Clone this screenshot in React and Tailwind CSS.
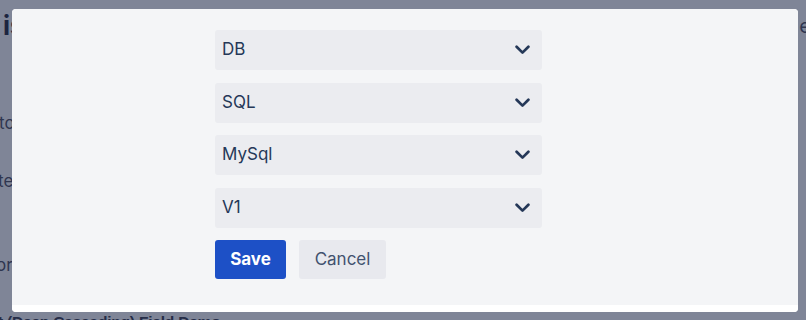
import React from 'react'

const options = ['DB', 'SQL', 'MySql', 'V1']

const Chevron = () => (
  <svg width="15" height="10" viewBox="0 0 15 10" fill="none">
    <path d="M1.6 1.8L7.5 7.6L13.4 1.8" stroke="#253858" strokeWidth="2.7" strokeLinecap="round" strokeLinejoin="round" />
  </svg>
)

const SelectBox = ({ value }) => (
  <div className="flex h-[40px] w-[327px] items-center justify-between rounded-[3px] bg-[#ebecf0] pl-[7px] pr-[12px]">
    <span className="text-[17px] text-[#253858]">{value}</span>
    <Chevron />
  </div>
)

export default function App() {
  return (
    <div className="relative h-[320px] w-[806px] overflow-hidden bg-[#7f8597]" style={{ fontFamily: 'Inter, "Liberation Sans", sans-serif' }}>
      {/* page behind the dialog */}
      <div className="flex flex-col text-[#2f3650]">
        <div className="flex items-start justify-between">
          <div className="ml-[3px] mt-[11px] text-[26px] font-bold leading-[30px] text-[#1c2440]">is</div>
          <div className="mr-[-5px] mt-[14px] text-[20px] leading-[24px]">e</div>
        </div>
        <div className="ml-[-1px] mt-[72px] text-[17px] leading-[20px]">to</div>
        <div className="ml-[-2px] mt-[38px] text-[17px] leading-[20px]">te</div>
        <div className="ml-[-4px] mt-[64px] text-[17px] leading-[20px]">or</div>
        <div className="ml-[-2px] mt-[37px] text-[15.5px] font-bold leading-[20px] tracking-[-0.2px] text-[#262d48]" style={{ fontFamily: '"Liberation Sans", sans-serif' }}>t (Deep Cascading) Field Demo</div>
      </div>

      {/* dialog */}
      <div className="absolute left-[12px] top-[9px] flex h-[303px] w-[786px] flex-col overflow-hidden rounded-[4px] bg-white">
        <div className="flex flex-1 flex-col gap-[12.5px] bg-[#f4f5f7] pl-[203px] pt-[21px]">
          {options.map((o) => (
            <SelectBox key={o} value={o} />
          ))}
          <div className="flex gap-[13px]">
            <button className="h-[39px] w-[71px] rounded-[3px] bg-[#1d50c6] text-[17px] font-bold text-white">Save</button>
            <button className="h-[39px] w-[87px] rounded-[3px] bg-[#e8e9ee] text-[17px] text-[#42526e]">Cancel</button>
          </div>
        </div>
        <div className="h-[7px] bg-white" />
      </div>
    </div>
  )
}
